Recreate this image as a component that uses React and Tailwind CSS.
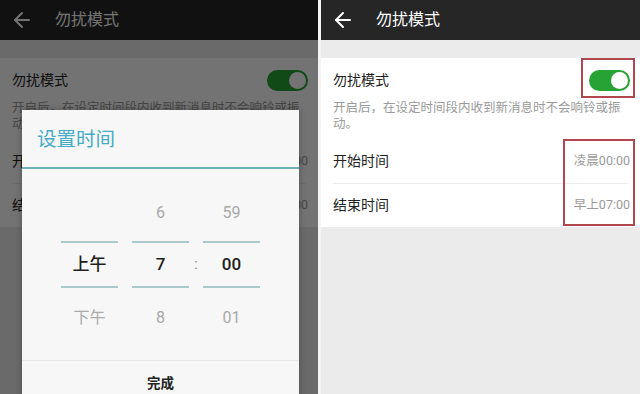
import React from 'react'
import { ArrowLeft } from 'lucide-react'

const FONT = "font-['Roboto','Noto_Sans_CJK_SC',sans-serif]"

function Toggle() {
  return (
    <div className="relative h-[21px] w-[41px] rounded-full bg-[#27a234]">
      <div className="absolute right-[2px] top-[2px] h-[17px] w-[17px] rounded-full bg-white" />
    </div>
  )
}

function SettingsScreen() {
  return (
    <div className="flex h-full w-full flex-col bg-[#ebebec]">
      <div className="flex h-[40px] shrink-0 items-center bg-[#262626]">
        <ArrowLeft size={24} strokeWidth={2} className="ml-[10px] text-white" />
        <span className="ml-[21px] text-[16px] text-white">勿扰模式</span>
      </div>
      <div className="mt-[18px] bg-white">
        <div className="pl-[12px] pr-[10px] pt-[10px] pb-[9px]">
          <div className="flex h-[24px] items-center justify-between">
            <span className="text-[14px] text-[#222]">勿扰模式</span>
            <Toggle />
          </div>
          <p className="mt-[7px] pr-[2px] font-['Noto_Sans_CJK_SC',sans-serif] text-[12.5px] leading-[16px] text-[#9a9a9a]">
            开启后，在设定时间段内收到新消息时不会响铃或振动。
          </p>
        </div>
        <div className="flex h-[43px] items-center justify-between pl-[12px] pr-[10px]">
          <span className="text-[14px] text-[#222]">开始时间</span>
          <span className="text-[12.5px] text-[#9a9a9a]">凌晨00:00</span>
        </div>
        <div className="mx-[12px] h-px bg-[#ededed]" />
        <div className="flex h-[43px] items-center justify-between pl-[12px] pr-[10px]">
          <span className="text-[14px] text-[#222]">结束时间</span>
          <span className="text-[12.5px] text-[#9a9a9a]">早上07:00</span>
        </div>
      </div>
    </div>
  )
}

function PickerColumn({ items }) {
  return (
    <div className="flex w-[57px] flex-col items-center">
      <div className="flex h-[57px] w-full items-center justify-center text-[16px] text-[#a9a9a9]">{items[0]}</div>
      <div className="flex h-[47px] w-full items-center justify-center border-y-2 border-[#a9c9cc] text-[17px] font-medium text-[#1e1e1e]">
        {items[1]}
      </div>
      <div className="flex h-[60px] w-full items-center justify-center text-[16px] text-[#a9a9a9]">{items[2]}</div>
    </div>
  )
}

function TimeDialog() {
  return (
    <div className="absolute left-[22px] top-[110px] w-[277px] bg-[#f7f7f7] shadow-[0_0_6px_rgba(0,0,0,0.3)]">
      <div className="flex h-[57px] items-center pl-[15px] pt-[2px] text-[19.5px] text-[#45abc6]">设置时间</div>
      <div className="h-[2px] bg-[#6fb2ba]" />
      <div className="flex pl-[39px] pt-[15px]">
        <PickerColumn items={['', '上午', '下午']} />
        <div className="w-[14px]" />
        <PickerColumn items={['6', '7', '8']} />
        <div className="flex w-[14px] flex-col">
          <div className="h-[57px]" />
          <div className="flex h-[47px] items-center justify-center text-[14px] text-[#888]">:</div>
        </div>
        <PickerColumn items={['59', '00', '01']} />
      </div>
      <div className="mt-[12px] h-px bg-[#e8e8e8]" />
      <div className="flex h-[44px] items-center justify-center text-[13.5px] font-bold text-[#222]">完成</div>
    </div>
  )
}

export default function App() {
  return (
    <div lang="zh-CN" className={`flex h-[394px] w-[640px] gap-[3px] overflow-hidden bg-[#f4f4f4] ${FONT}`}>
      <div className="relative h-full w-[318px] overflow-hidden">
        <SettingsScreen />
        <div className="absolute inset-0 bg-black/[0.55]" />
        <TimeDialog />
      </div>
      <div className="relative h-full w-[319px] overflow-hidden">
        <SettingsScreen />
        <div className="absolute left-[260px] top-[58px] h-[40px] w-[54px] border-2 border-[#b0464e]" />
        <div className="absolute left-[242px] top-[139px] h-[87px] w-[72px] border-2 border-[#b0464e]" />
      </div>
    </div>
  )
}
